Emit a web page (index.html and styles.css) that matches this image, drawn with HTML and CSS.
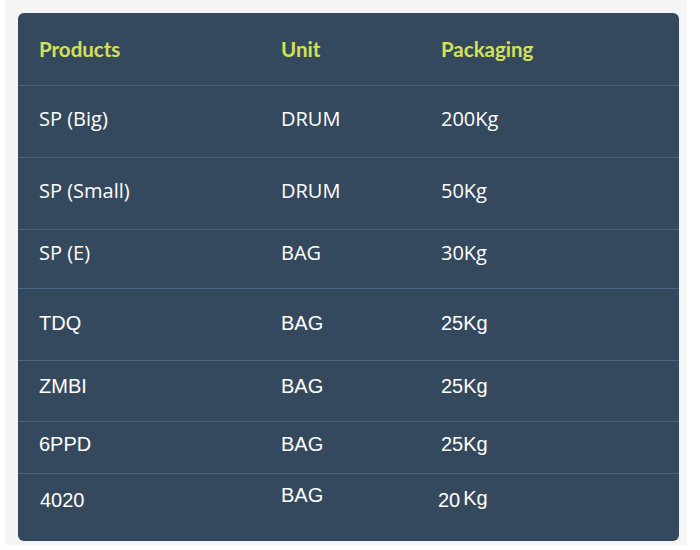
FILE: index.html
```html
<!DOCTYPE html>
<html>
<head>
<meta charset="utf-8">
<link rel="stylesheet" href="styles.css">
</head>
<body>
<div class="wrap">
  <div class="card">
    <table class="tbl">
      <thead>
        <tr class="r0"><th class="c1">Products</th><th class="c2">Unit</th><th class="c3">Packaging</th></tr>
      </thead>
      <tbody>
        <tr class="r1"><td>SP (Big)</td><td>DRUM</td><td>200Kg</td></tr>
        <tr class="r2"><td>SP (Small)</td><td>DRUM</td><td>50Kg</td></tr>
        <tr class="r3"><td>SP (E)</td><td>BAG</td><td>30Kg</td></tr>
        <tr class="r4 alt"><td>TDQ</td><td>BAG</td><td>25Kg</td></tr>
        <tr class="r5 alt"><td>ZMBI</td><td>BAG</td><td>25Kg</td></tr>
        <tr class="r6 alt"><td>6PPD</td><td>BAG</td><td>25Kg</td></tr>
        <tr class="r7 alt"><td class="low">4020</td><td class="high">BAG</td><td class="mid">20<span class="kg">Kg</span></td></tr>
      </tbody>
    </table>
  </div>
</div>
</body>
</html>
```
FILE: styles.css
```css
html, body {
  margin: 0;
  padding: 0;
  background: #ffffff;
}
.wrap {
  margin-left: 5px;
  width: 669px;
  height: 532px;
  padding: 13px 0 0 13px;
  background: #f5f5f5;
}
.card {
  width: 661px;
  height: 528px;
  background: #34495e;
  border-radius: 6px;
  overflow: hidden;
}
.tbl {
  width: 100%;
  border-collapse: collapse;
  table-layout: fixed;
  font-family: "Open Sans", Lato, sans-serif;
  font-size: 20px;
  color: #ffffff;
}
.c1 { width: 221px; }
.c2 { width: 139px; }
.tbl th, .tbl td {
  text-align: left;
  padding: 0 0 0 21px;
  line-height: 24px;
  vertical-align: top;
  white-space: nowrap;
}
.tbl th {
  font-family: Lato, "Open Sans", sans-serif;
  color: #d4e157;
  font-weight: 700;
  font-size: 20.5px;
  padding-top: 24px;
}
.tbl tr { border-top: 1px solid #4a6481; }
.tbl tr.r0 { border-top: none; height: 72px; }
.r1 { height: 72px; }
.r2 { height: 72px; }
.r3 { height: 59px; }
.r4 { height: 72px; }
.r5 { height: 61px; }
.r6 { height: 52px; }
.r7 { height: 68px; }
.r1 td, .r2 td { padding-top: 21px; }
.r3 td { padding-top: 11px; }
.r4 td { padding-top: 22px; }
.r5 td { padding-top: 13px; }
.r6 td { padding-top: 10px; }
.alt td { font-family: "Liberation Sans", Arial, sans-serif; font-size: 20px; }
.r7 td.low { padding-top: 14px; padding-left: 22px; }
.r7 td.high { padding-top: 9px; }
.r7 td.mid { padding-top: 12px; padding-left: 18px; }
.kg { margin-left: 3px; vertical-align: 2px; }
```
